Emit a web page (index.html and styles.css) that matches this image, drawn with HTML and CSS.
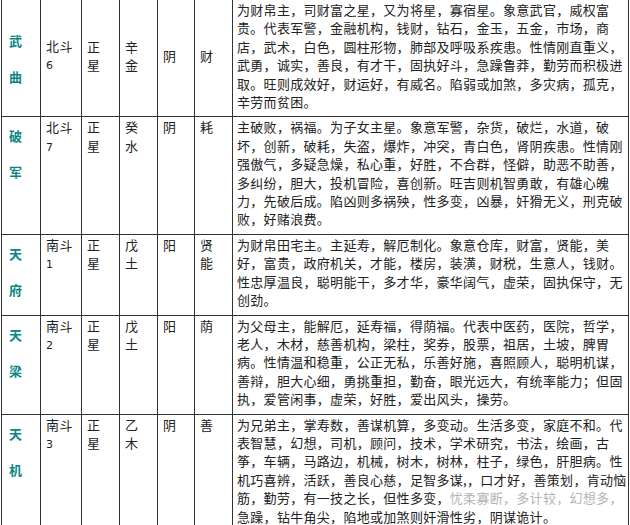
FILE: index.html
```html
<!DOCTYPE html>
<html lang="zh-CN">
<head>
<meta charset="utf-8">
<title>紫微斗数星曜</title>
<link rel="stylesheet" href="styles.css">
</head>
<body>
<table class="stars">
  <colgroup>
    <col class="c-name"><col class="c-dou"><col class="c-type"><col class="c-wx"><col class="c-yy"><col class="c-hua"><col class="c-desc">
  </colgroup>
  <tbody>
    <tr class="row-mid">
      <td class="name">武<br>曲</td>
      <td>北斗<br><span class="num">6</span></td>
      <td>正<br>星</td>
      <td>辛<br>金</td>
      <td>阴</td>
      <td>财</td>
      <td class="desc">为财帛主，司财富之星，又为将星，寡宿星。象意武官，威权富<br>贵。代表军警，金融机构，钱财，钻石，金玉，五金，市场，商<br>店，武术，白色，圆柱形物，肺部及呼吸系疾患。性情刚直重义，<br>武勇，诚实，善良，有才干，固执好斗，急躁鲁莽，勤劳而积极进<br>取。旺则成效好，财运好，有威名。陷弱或加煞，多灾病，孤克，<br>辛劳而贫困。</td>
    </tr>
    <tr>
      <td class="name">破<br>军</td>
      <td>北斗<br><span class="num">7</span></td>
      <td>正<br>星</td>
      <td>癸<br>水</td>
      <td>阴</td>
      <td>耗</td>
      <td class="desc">主破败，祸福。为子女主星。象意军警，杂货，破烂，水道，破<br>坏，创新，破耗，失盗，爆炸，冲突，青白色，肾阴疾患。性情刚<br>强傲气，多疑急燥，私心重，好胜，不合群，怪僻，助恶不助善，<br>多纠纷，胆大，投机冒险，喜创新。旺吉则机智勇敢，有雄心魄<br>力，先破后成。陷凶则多祸殃，性多变，凶暴，奸猾无义，刑克破<br>败，好赌浪费。</td>
    </tr>
    <tr>
      <td class="name">天<br>府</td>
      <td>南斗<br><span class="num">1</span></td>
      <td>正<br>星</td>
      <td>戊<br>土</td>
      <td>阳</td>
      <td>贤<br>能</td>
      <td class="desc">为财帛田宅主。主延寿，解厄制化。象意仓库，财富，贤能，美<br>好，富贵，政府机关，才能，楼房，装潢，财税，生意人，钱财。<br>性忠厚温良，聪明能干，多才华，豪华阔气，虚荣，固执保守，无<br>创劲。</td>
    </tr>
    <tr>
      <td class="name">天<br>梁</td>
      <td>南斗<br><span class="num">2</span></td>
      <td>正<br>星</td>
      <td>戊<br>土</td>
      <td>阳</td>
      <td>荫</td>
      <td class="desc">为父母主，能解厄，延寿福，得荫福。代表中医药，医院，哲学，<br>老人，木材，慈善机构，梁柱，奖券，股票，祖居，土坡，脾胃<br>病。性情温和稳重，公正无私，乐善好施，喜照顾人，聪明机谋，<br>善辩，胆大心细，勇挑重担，勤奋，眼光远大，有统率能力；但固<br>执，爱管闲事，虚荣，好胜，爱出风头，操劳。</td>
    </tr>
    <tr>
      <td class="name">天<br>机</td>
      <td>南斗<br><span class="num">3</span></td>
      <td>正<br>星</td>
      <td>乙<br>木</td>
      <td>阴</td>
      <td>善</td>
      <td class="desc">为兄弟主，掌寿数，善谋机算，多变动。生活多变，家庭不和。代<br>表智慧，幻想，司机，顾问，技术，学术研究，书法，绘画，古<br>筝，车辆，马路边，机械，树木，树林，柱子，绿色，肝胆病。性<br>机巧喜辨，活跃，善良心慈，足智多谋,，口才好，善策划，肯动恼<br>筋，勤劳，有一技之长，但性多变，<span class="faded">忧柔寡断，多计较，幻想多，</span><br>急躁，钻牛角尖，陷地或加煞则奸滑性劣，阴谋诡计。</td>
    </tr>
  </tbody>
</table>
</body>
</html>
```

FILE: styles.css
```css
html, body {
  margin: 0;
  padding: 0;
  background: #ffffff;
}

body {
  font-family: "Noto Sans CJK SC", "Noto Sans", sans-serif;
  font-size: 13px;
  color: #222222;
}

.stars {
  border-collapse: collapse;
  table-layout: fixed;
  width: 627px;
  margin: -1px 0 0 1px;
}

.c-name { width: 39px; }
.c-dou  { width: 41px; }
.c-type { width: 38px; }
.c-wx   { width: 38px; }
.c-yy   { width: 37px; }
.c-hua  { width: 38px; }
.c-desc { width: 396px; }

.stars td {
  border: 1px solid #333333;
  padding: 1px 2px 5px 5px;
  vertical-align: top;
  line-height: 18.4px;
  letter-spacing: 0.6px;
}

.stars .row-mid td {
  vertical-align: middle;
}

.stars td.name {
  color: #0b8585;
  font-weight: bold;
  line-height: 36px;
  padding: 1px 2px 0 7px;
}

.stars td.desc {
  white-space: nowrap;
  letter-spacing: 0.3px;
  padding: 1px 0 5px 4px;
}

.num {
  font-family: "DejaVu Sans", sans-serif;
  font-size: 11px;
  letter-spacing: 0;
}

.faded {
  color: #b4b4b4;
}
```
